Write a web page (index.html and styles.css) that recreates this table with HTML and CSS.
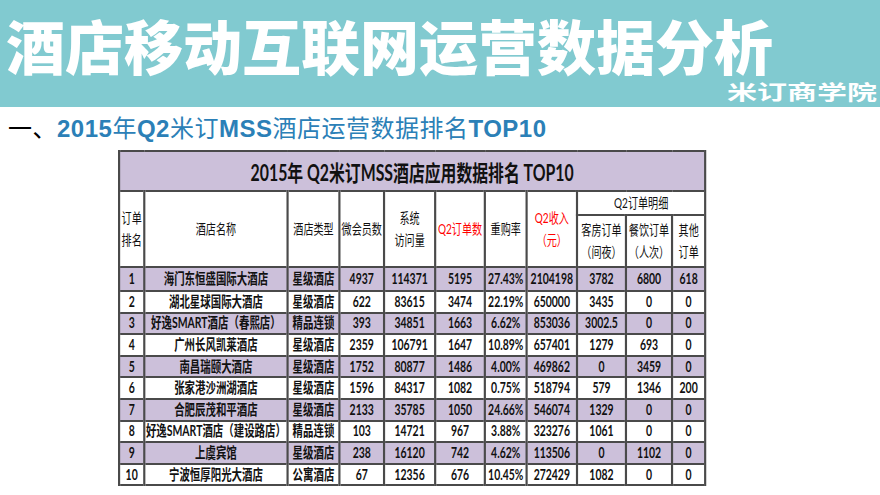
FILE: index.html
```html
<!DOCTYPE html>
<html lang="zh-CN">
<head>
<meta charset="utf-8">
<title>酒店移动互联网运营数据分析</title>
<link rel="stylesheet" href="styles.css">
</head>
<body>
<header class="banner">
  <h1 class="banner-title">酒店移动互联网运营数据分析</h1>
  <div class="banner-sub"><span class="brand">米订商学院</span></div>
</header>
<main class="content">
  <h2 class="section-title"><span class="num">一、</span><span class="hl"><b>2015</b>年<b>Q2</b>米订<b>MSS</b>酒店运营数据排名<b>TOP10</b></span></h2>
  <div class="table-wrap">
    <table class="rank">
      <colgroup>
        <col class="c-rank">
        <col class="c-name">
        <col class="c-type">
        <col class="c-mem">
        <col class="c-visit">
        <col class="c-orders">
        <col class="c-repeat">
        <col class="c-income">
        <col class="c-room">
        <col class="c-food">
        <col class="c-other">
      </colgroup>
      <thead>
        <tr class="caption-row"><th colspan="11">2015年 Q2米订MSS酒店应用数据排名 TOP10</th></tr>
        <tr class="head-a">
          <th rowspan="2">订单<br>排名</th>
          <th rowspan="2">酒店名称</th>
          <th rowspan="2">酒店类型</th>
          <th rowspan="2">微会员数</th>
          <th rowspan="2">系统<br>访问量</th>
          <th rowspan="2" class="red">Q2订单数</th>
          <th rowspan="2">重购率</th>
          <th rowspan="2" class="red">Q2收入<br>（元）</th>
          <th colspan="3">Q2订单明细</th>
        </tr>
        <tr class="head-b">
          <th>客房订单<br>（间夜）</th>
          <th>餐饮订单<br>（人次）</th>
          <th>其他<br>订单</th>
        </tr>
      </thead>
      <tbody>
        <tr class="first"><td>1</td><td>海门东恒盛国际大酒店</td><td>星级酒店</td><td>4937</td><td>114371</td><td>5195</td><td>27.43%</td><td>2104198</td><td>3782</td><td>6800</td><td>618</td></tr>
        <tr><td>2</td><td>湖北星球国际大酒店</td><td>星级酒店</td><td>622</td><td>83615</td><td>3474</td><td>22.19%</td><td>650000</td><td>3435</td><td>0</td><td>0</td></tr>
        <tr><td>3</td><td>好逸SMART酒店（春熙店）</td><td>精品连锁</td><td>393</td><td>34851</td><td>1663</td><td>6.62%</td><td>853036</td><td>3002.5</td><td>0</td><td>0</td></tr>
        <tr><td>4</td><td>广州长风凯莱酒店</td><td>星级酒店</td><td>2359</td><td>106791</td><td>1647</td><td>10.89%</td><td>657401</td><td>1279</td><td>693</td><td>0</td></tr>
        <tr><td>5</td><td>南昌瑞颐大酒店</td><td>星级酒店</td><td>1752</td><td>80877</td><td>1486</td><td>4.00%</td><td>469862</td><td>0</td><td>3459</td><td>0</td></tr>
        <tr><td>6</td><td>张家港沙洲湖酒店</td><td>星级酒店</td><td>1596</td><td>84317</td><td>1082</td><td>0.75%</td><td>518794</td><td>579</td><td>1346</td><td>200</td></tr>
        <tr><td>7</td><td>合肥辰茂和平酒店</td><td>星级酒店</td><td>2133</td><td>35785</td><td>1050</td><td>24.66%</td><td>546074</td><td>1329</td><td>0</td><td>0</td></tr>
        <tr><td>8</td><td>好逸SMART酒店（建设路店）</td><td>精品连锁</td><td>103</td><td>14721</td><td>967</td><td>3.88%</td><td>323276</td><td>1061</td><td>0</td><td>0</td></tr>
        <tr><td>9</td><td>上虞宾馆</td><td>星级酒店</td><td>238</td><td>16120</td><td>742</td><td>4.62%</td><td>113506</td><td>0</td><td>1102</td><td>0</td></tr>
        <tr><td>10</td><td>宁波恒厚阳光大酒店</td><td>公寓酒店</td><td>67</td><td>12356</td><td>676</td><td>10.45%</td><td>272429</td><td>1082</td><td>0</td><td>0</td></tr>
      </tbody>
    </table>
  </div>
</main>
</body>
</html>
```

FILE: styles.css
```css
* { box-sizing: border-box; }
html, body { margin: 0; padding: 0; }
body {
  width: 880px;
  height: 495px;
  overflow: hidden;
  background: #ffffff;
  font-family: "Noto Sans CJK SC", sans-serif;
}

/* ---- banner ---- */
.banner {
  height: 107px;
  background: #81cad0;
  padding: 12px 3px 0 6px;
  display: flex;
  flex-direction: column;
}
.banner-title {
  margin: 0;
  font-family: "Noto Sans CJK SC", sans-serif;
  font-size: 59px;
  line-height: 62px;
  height: 66px;
  font-weight: 900;
  color: #ffffff;
  white-space: nowrap;
  padding-top: 2px;
}
.banner-sub {
  margin-top: 4px;
  text-align: right;
  line-height: 20px;
}
.brand {
  display: inline-block;
  font-size: 20px;
  font-weight: 700;
  color: #ffffff;
  transform: scaleX(1.5);
  transform-origin: 100% 50%;
}

/* ---- section heading ---- */
.section-title {
  margin: 9px 0 0 8px;
  font-family: "Liberation Sans", "Noto Sans CJK SC", sans-serif;
  font-size: 24px;
  line-height: 26px;
  height: 26px;
  font-weight: 400;
  letter-spacing: 0.5px;
  color: #000000;
  white-space: nowrap;
}
.hl { color: #2b80b7; }
.hl b { font-weight: 700; }

/* ---- table ---- */
.table-wrap { margin: 8px 0 0 118px; }
.rank {
  border-collapse: collapse;
  table-layout: fixed;
  width: 814px;
  transform: scaleX(0.72);
  transform-origin: 0 0;
  font-family: "Lato", "Noto Sans CJK SC", sans-serif;
  color: #111111;
}
.c-rank { width: 35px; }
.c-name { width: 199px; }
.c-type { width: 72px; }
.c-mem { width: 62px; }
.c-visit { width: 71px; }
.c-orders { width: 69px; }
.c-repeat { width: 58px; }
.c-income { width: 70px; }
.c-room { width: 68px; }
.c-food { width: 64px; }
.c-other { width: 46px; }

.rank th,
.rank td {
  border: solid #4a4a4a;
  border-width: 2px 3px;
  padding: 0;
  text-align: center;
  vertical-align: middle;
  white-space: nowrap;
}
.caption-row th {
  height: 40px;
  background: #ccc0da;
  font-size: 22px;
  font-weight: 700;
}
.head-a th,
.head-b th {
  font-size: 14px;
  line-height: 22px;
  font-weight: 400;
  background: #ffffff;
}
.head-a { height: 22px; }
.head-b { height: 52px; }
.red { color: #ff0000; }

.rank td {
  font-size: 14.5px;
  font-weight: 700;
  height: 21.6px;
  line-height: 18px;
}
.rank tr.first td { height: 24px; }
.rank tbody tr:nth-child(odd) td { background: #ccc0da; }
.rank tbody tr:nth-child(even) td { background: #ffffff; }
```
